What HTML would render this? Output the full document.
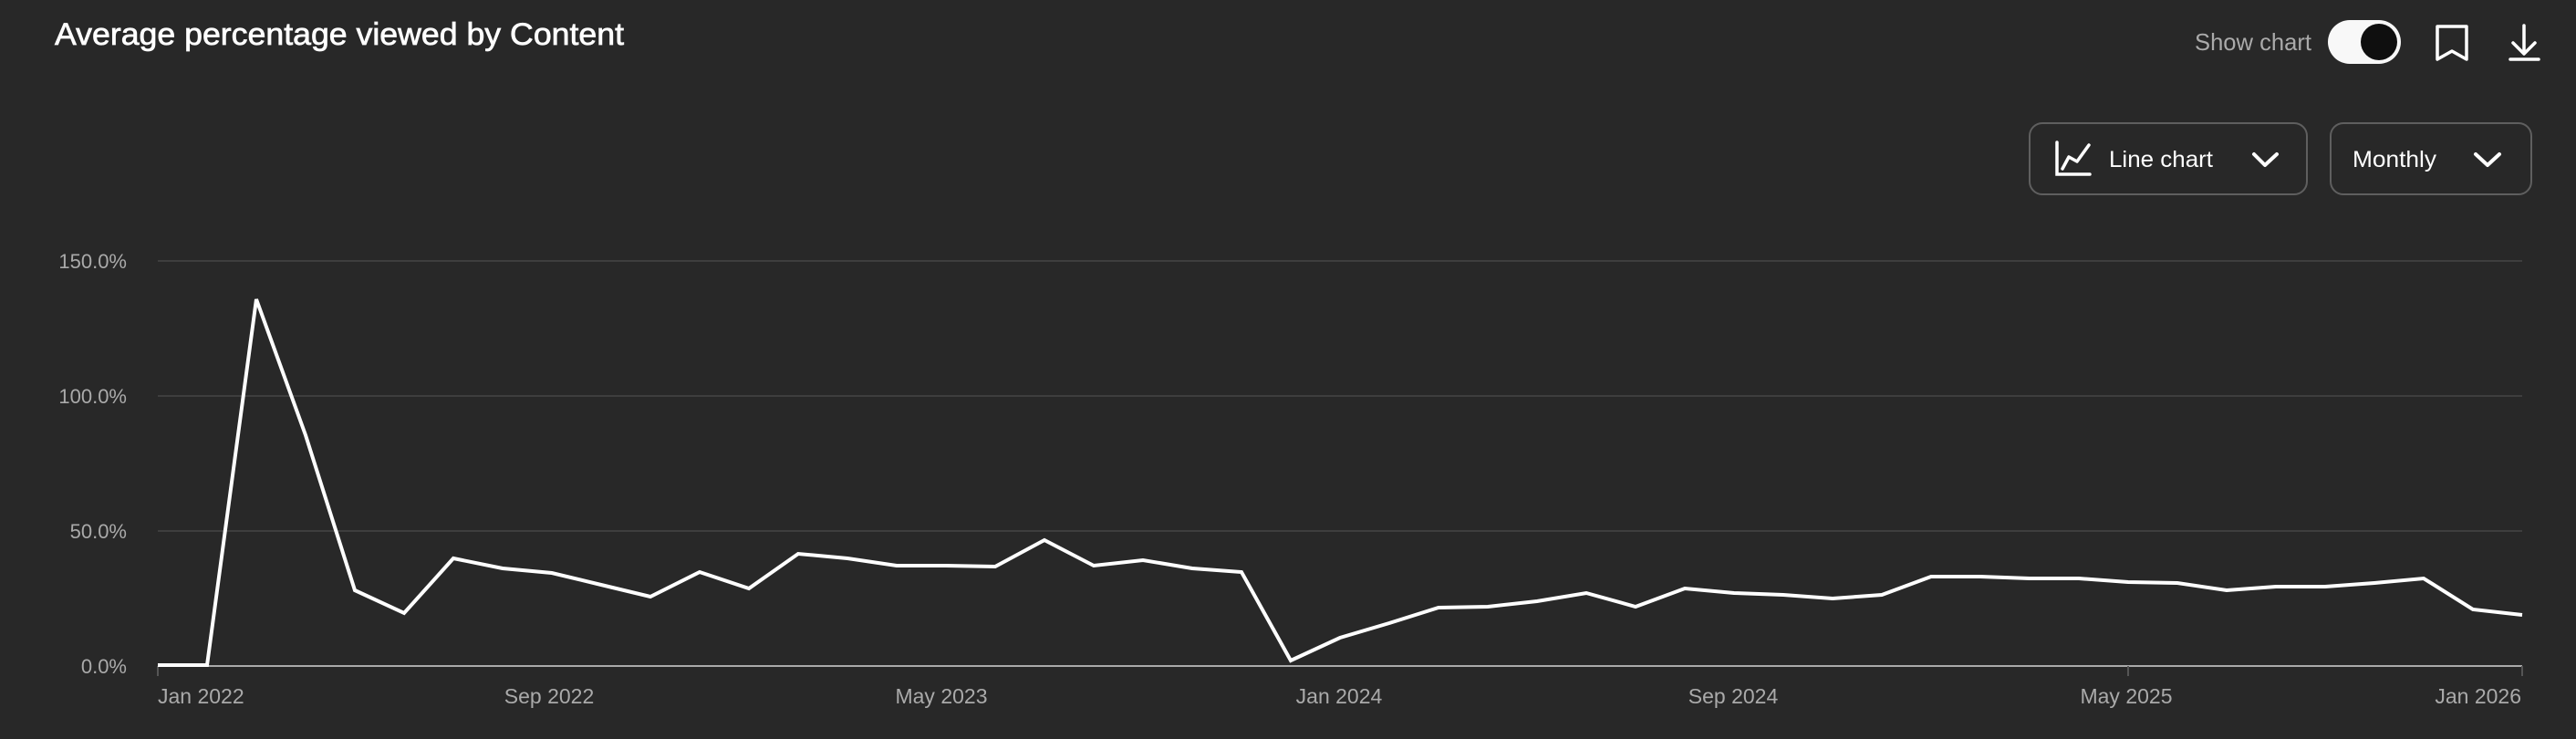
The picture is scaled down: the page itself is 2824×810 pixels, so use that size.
<!DOCTYPE html>
<html><head><meta charset="utf-8"><style>
html,body{margin:0;padding:0;background:#282828;}
svg{display:block;}
text{font-family:"Liberation Sans",sans-serif;}
</style></head><body>
<svg width="2824" height="810" viewBox="0 0 2824 810" xmlns="http://www.w3.org/2000/svg">
<rect width="2824" height="810" fill="#282828"/>
<text x="60" y="49" font-size="34" fill="#fff" stroke="#fff" stroke-width="0.7" textLength="624" lengthAdjust="spacingAndGlyphs">Average percentage viewed by Content</text>

<text x="2406" y="55" font-size="26" fill="#aaa" textLength="128" lengthAdjust="spacingAndGlyphs">Show chart</text>
<rect x="2552" y="22" width="80" height="48" rx="24" fill="#f8f8f8"/>
<circle cx="2608" cy="46" r="20" fill="#0f0f0f"/>
<path d="M2672 29 H2704 V65 L2688 56 L2672 65 Z" fill="none" stroke="#fff" stroke-width="3.5" stroke-linejoin="round"/>
<path d="M2767 28 V58 M2755 47 L2767 59 L2779 47 M2752 65 H2783" fill="none" stroke="#fff" stroke-width="3.5" stroke-linecap="round" stroke-linejoin="round"/>

<rect x="2225" y="135" width="304" height="78" rx="14" fill="none" stroke="#5f5f5f" stroke-width="2"/>
<path d="M2255 156 V191 H2291" fill="none" stroke="#fff" stroke-width="3.5" stroke-linecap="round"/>
<path d="M2261 185 L2268 172 L2277 177 L2290 159" fill="none" stroke="#fff" stroke-width="3.5" stroke-linecap="round" stroke-linejoin="round"/>
<text x="2312" y="183" font-size="25" fill="#fff" textLength="114" lengthAdjust="spacingAndGlyphs">Line chart</text>
<path d="M2471 169 L2483 181 L2496 169" fill="none" stroke="#fff" stroke-width="4" stroke-linecap="round" stroke-linejoin="round"/>

<rect x="2555" y="135" width="220" height="78" rx="14" fill="none" stroke="#5f5f5f" stroke-width="2"/>
<text x="2579" y="183" font-size="25" fill="#fff" textLength="92" lengthAdjust="spacingAndGlyphs">Monthly</text>
<path d="M2714 169 L2727 181 L2740 169" fill="none" stroke="#fff" stroke-width="4" stroke-linecap="round" stroke-linejoin="round"/>

<g stroke="#3e3e3e" stroke-width="2">
<line x1="173" y1="286" x2="2765" y2="286"/>
<line x1="173" y1="434" x2="2765" y2="434"/>
<line x1="173" y1="582" x2="2765" y2="582"/>
</g>
<line x1="173" y1="730" x2="2765" y2="730" stroke="#aaa" stroke-width="2"/>
<g stroke="#555" stroke-width="2">
<line x1="173" y1="730" x2="173" y2="741"/>
<line x1="2333" y1="730" x2="2333" y2="741"/>
<line x1="2765" y1="730" x2="2765" y2="741"/>
</g>
<g font-size="22" fill="#aaa" text-anchor="end">
<text x="139" y="294">150.0%</text>
<text x="139" y="442">100.0%</text>
<text x="139" y="590">50.0%</text>
<text x="139" y="738">0.0%</text>
</g>
<g font-size="23" fill="#aaa" text-anchor="middle">
<text x="173" y="771" text-anchor="start">Jan 2022</text>
<text x="602" y="771">Sep 2022</text>
<text x="1032" y="771">May 2023</text>
<text x="1468" y="771">Jan 2024</text>
<text x="1900" y="771">Sep 2024</text>
<text x="2331" y="771">May 2025</text>
<text x="2764" y="771" text-anchor="end">Jan 2026</text>
</g>
<polyline fill="none" stroke="#fff" stroke-width="4" stroke-linejoin="miter" points="
173,729 227,729 281,328 335,477 389,647 443,672 497,612 551,623 605,628 659,641 713,654 767,627 821,645 875,607 929,612 983,620 1037,620 1091,621 1145,592 1199,620 1253,614 1307,623 1361,627 1415,724 1469,699 1523,683 1577,666 1631,665 1685,659 1739,650 1793,665 1847,645 1901,650 1955,652 2009,656 2063,652 2117,632 2171,632 2225,634 2279,634 2333,638 2387,639 2441,647 2495,643 2549,643 2603,639 2657,634 2711,668 2765,674"/>
</svg>
</body></html>
